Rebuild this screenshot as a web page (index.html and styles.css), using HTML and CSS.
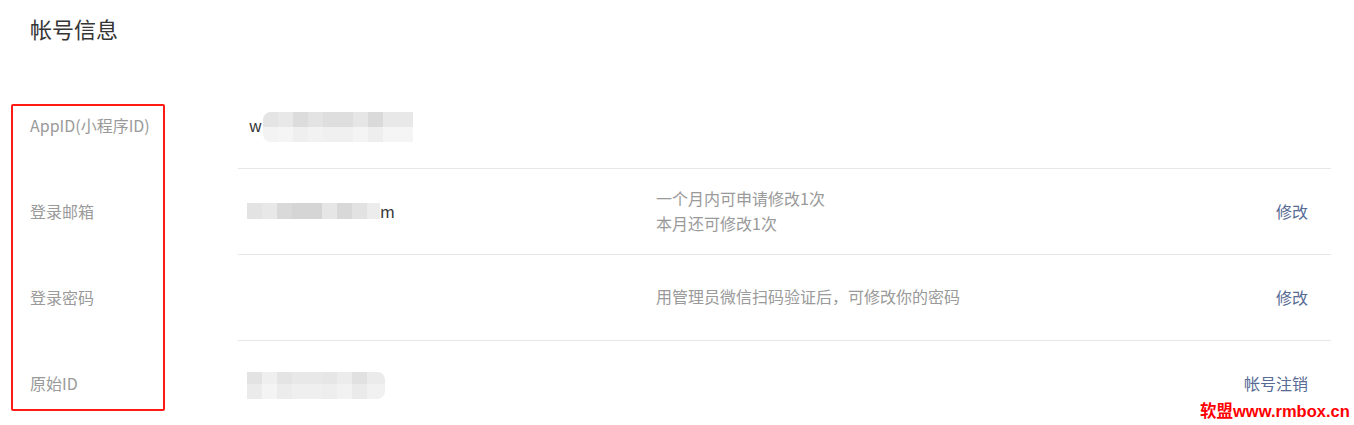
FILE: index.html
```html
<!DOCTYPE html>
<html lang="zh-CN">
<head>
<meta charset="utf-8">
<title>帐号信息</title>
<link rel="stylesheet" href="styles.css">
</head>
<body>
<div class="page">
  <h2 class="title">帐号信息</h2>
  <div class="table">
    <div class="row">
      <div class="label">AppID(小程序ID)</div>
      <div class="cell">
        <div class="value"><span class="first">w</span><span class="blur blur-a"></span></div>
        <div class="desc"></div>
        <div class="action"></div>
      </div>
    </div>
    <div class="row">
      <div class="label">登录邮箱</div>
      <div class="cell">
        <div class="value"><span class="blur blur-b"></span><span>m</span></div>
        <div class="desc">一个月内可申请修改1次<br>本月还可修改1次</div>
        <div class="action"><a href="#">修改</a></div>
      </div>
    </div>
    <div class="row">
      <div class="label">登录密码</div>
      <div class="cell">
        <div class="value"></div>
        <div class="desc">用管理员微信扫码验证后，可修改你的密码</div>
        <div class="action"><a href="#">修改</a></div>
      </div>
    </div>
    <div class="row last">
      <div class="label">原始ID</div>
      <div class="cell">
        <div class="value"><span class="blur blur-c"></span></div>
        <div class="desc"></div>
        <div class="action"><a href="#">帐号注销</a></div>
      </div>
    </div>
  </div>
  <div class="highlight"></div>
  <div class="watermark">软盟www.rmbox.cn</div>
</div>
</body>
</html>
```
FILE: styles.css
```css
* { box-sizing: border-box; }
html, body {
  margin: 0;
  padding: 0;
  background: #fff;
}
body {
  font-family: "Noto Sans CJK SC", "Microsoft YaHei", sans-serif;
  color: #353535;
  width: 1354px;
  height: 425px;
  overflow: hidden;
}
.page {
  position: relative;
  height: 425px;
  padding-left: 30px;
}
.title {
  margin: 0;
  padding-top: 11px;
  height: 83px;
  font-size: 22px;
  line-height: 34px;
  font-weight: 400;
  color: #353535;
}
.table {
  width: 1301px;
}
.row {
  display: flex;
  height: 86px;
}
.label {
  width: 208px;
  flex: none;
  display: flex;
  align-items: center;
  padding-bottom: 3px;
  font-size: 16px;
  color: #9a9a9a;
}
.cell {
  flex: 1;
  display: flex;
  align-items: center;
  border-bottom: 1px solid #e7e7eb;
  padding: 0 23px 2px 9px;
}
.row.last .cell { border-bottom: none; padding-bottom: 3px; }
.value {
  width: 409px;
  flex: none;
  display: flex;
  align-items: center;
  font-size: 16px;
  color: #353535;
}
.value .first {
  margin-left: 2px;
}
.desc {
  flex: 1;
  font-size: 16px;
  line-height: 25px;
  color: #9a9a9a;
}
.action {
  font-size: 16px;
}
.action a {
  color: #576b95;
  text-decoration: none;
}
.blur {
  display: inline-block;
}
.blur-a {
  width: 150px;
  height: 30px;
  margin-left: 1px;
  margin-top: 4px;
  border-radius: 8px 0 0 8px;
  background:
    linear-gradient(to bottom, transparent 0, transparent 50%, rgba(255,255,255,0.55) 50%),
    linear-gradient(to right, #e4e4e4 0 15px, #e8e8e8 15px 30px, #dcdcdc 30px 45px, #e3e3e3 45px 60px, #dedede 60px 90px, #e6e6e6 90px 105px, #dadada 105px 120px, #e8e8e8 120px 150px);
}
.blur-b {
  width: 133px;
  height: 16px;
  background: linear-gradient(to right, #e3e3e3 0 15px, #e8e8e8 15px 30px, #d9d9d9 30px 45px, #d5d5d5 45px 75px, #e6e6e6 75px 90px, #d8d8d8 90px 105px, #e2e2e2 105px 120px, #ececec 120px 133px);
}
.blur-c {
  width: 138px;
  height: 27px;
  margin-top: 6px;
  border-radius: 0 8px 8px 0;
  background:
    linear-gradient(to bottom, transparent 0 45%, rgba(255,255,255,0.3) 45%),
    linear-gradient(to right, #e3e3e3 0 15px, #efefef 15px 30px, #e4e4e4 30px 45px, #e8e8e8 45px 75px, #e6e6e6 75px 90px, #ececec 90px 105px, #e1e1e1 105px 120px, #ebebeb 120px 138px);
}
.highlight {
  position: absolute;
  left: 11px;
  top: 104px;
  width: 154px;
  height: 307px;
  border: 2px solid #ff1a14;
  border-radius: 2px;
}
.watermark {
  position: absolute;
  left: 1200px;
  top: 402px;
  font-family: "Liberation Sans", "Noto Sans CJK SC", sans-serif;
  font-size: 16.5px;
  font-weight: 700;
  line-height: 18px;
  color: #f00;
  letter-spacing: 0;
}
```
